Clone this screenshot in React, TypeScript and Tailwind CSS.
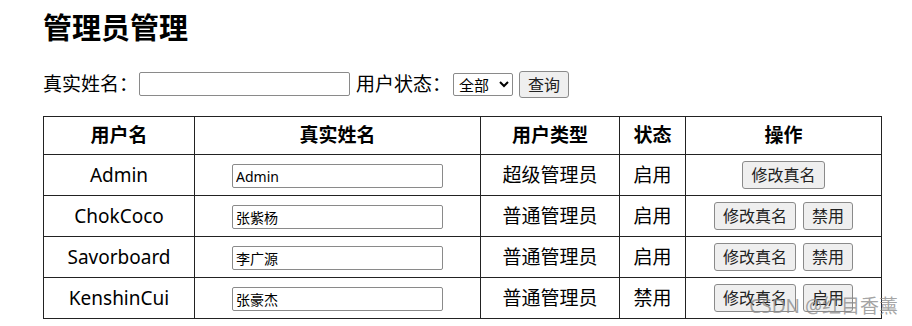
import React from "react";

type Row = {
  username: string;
  realName: string;
  type: string;
  status: string;
  actions: string[];
};

const rows: Row[] = [
  { username: "Admin", realName: "Admin", type: "超级管理员", status: "启用", actions: ["修改真名"] },
  { username: "ChokCoco", realName: "张紫杨", type: "普通管理员", status: "启用", actions: ["修改真名", "禁用"] },
  { username: "Savorboard", realName: "李广源", type: "普通管理员", status: "启用", actions: ["修改真名", "禁用"] },
  { username: "KenshinCui", realName: "张豪杰", type: "普通管理员", status: "禁用", actions: ["修改真名", "启用"] },
];

const font = { fontFamily: '"Noto Sans", "Noto Sans CJK SC", sans-serif' };

function Btn({ children, className = "" }: { children: React.ReactNode; className?: string }) {
  return (
    <button
      type="button"
      className={`rounded-[3px] border border-[#8a8a8a] bg-[#efefef] px-[8px] text-[16px] leading-[26px] text-[#222] ${className}`}
    >
      {children}
    </button>
  );
}

export default function App() {
  return (
    <div className="relative h-[326px] w-[912px] overflow-hidden bg-white text-black" style={font}>
      <div className="pl-[43px]">
        <h1 className="pt-[8px] text-[29px] font-bold leading-[40px]">管理员管理</h1>

        <div className="mt-[22px] flex h-[28px] items-center text-[19px]">
          <span>真实姓名：</span>
          <input
            type="text"
            className="ml-[1px] h-[24px] w-[211px] rounded-[2px] border border-[#8a8a8a] bg-white"
          />
          <span className="ml-[6px]">用户状态：</span>
          <select className="ml-[2px] h-[23px] w-[60px] rounded-[2px] border border-[#8a8a8a] bg-white pl-[1px] text-[15px]">
            <option>全部</option>
            <option>启用</option>
            <option>禁用</option>
          </select>
          <Btn className="ml-[6px] h-[27px] px-[8px] text-[15px]">查询</Btn>
        </div>

        <table className="mt-[18px] w-[838px] table-fixed border-collapse border border-[#222] text-[19px]">
          <colgroup>
            <col className="w-[151px]" />
            <col className="w-[286px]" />
            <col className="w-[139px]" />
            <col className="w-[66px]" />
            <col className="w-[196px]" />
          </colgroup>
          <thead>
            <tr className="h-[38px]">
              {["用户名", "真实姓名", "用户类型", "状态", "操作"].map((h) => (
                <th key={h} className="border border-[#222] text-center font-bold">
                  {h}
                </th>
              ))}
            </tr>
          </thead>
          <tbody>
            {rows.map((r) => (
              <tr key={r.username} className="h-[41px]">
                <td className="border border-[#222] text-center">{r.username}</td>
                <td className="border border-[#222] text-center">
                  <input
                    type="text"
                    defaultValue={r.realName}
                    className="h-[24px] w-[211px] rounded-[2px] border border-[#8a8a8a] bg-white px-[3px] text-[14px]"
                  />
                </td>
                <td className="border border-[#222] text-center">{r.type}</td>
                <td className="border border-[#222] text-center">{r.status}</td>
                <td className="border border-[#222] text-center">
                  <div className="flex items-center justify-center gap-[7px]">
                    {r.actions.map((a) => (
                      <Btn key={a}>{a}</Btn>
                    ))}
                  </div>
                </td>
              </tr>
            ))}
          </tbody>
        </table>
      </div>

      <div className="pointer-events-none absolute bottom-[6px] right-[14px] text-[19px] text-[#8c8c8c]/80">
        CSDN @红目香薰
      </div>
    </div>
  );
}
